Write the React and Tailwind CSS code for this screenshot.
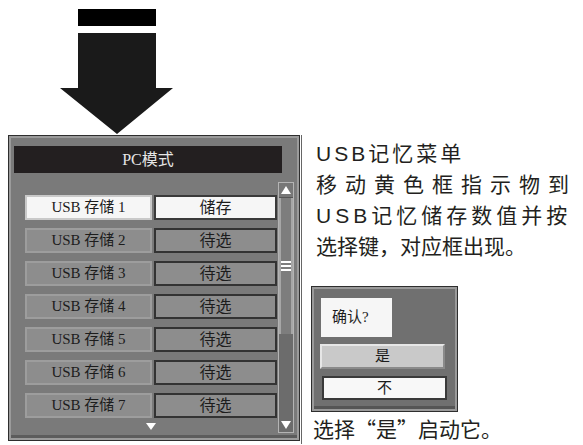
import React from 'react';

const cellFont = { fontFamily: '"Liberation Serif", "Noto Sans CJK SC", serif' };

const rows = [1, 2, 3, 4, 5, 6, 7];

const BigArrow = () => (
  <svg width="583" height="135" viewBox="0 0 583 135" className="block">
    <rect x="78" y="9" width="78" height="17" fill="#000" />
    <polygon points="78,33 156,33 156,88 173,88 117,134 60,88 78,88" fill="#1a1a1a" />
  </svg>
);

const Row = ({ n }) => {
  const active = n === 1;
  return (
    <div className="flex h-[25px] gap-[2px] text-[15px] text-[#1c1c1c]" style={cellFont}>
      <div
        className={
          active
            ? 'w-[127px] flex items-center justify-center bg-[#f6f6f6] border-2 border-[#c9c9c9]'
            : 'w-[127px] flex items-center justify-center bg-[#8d8d8d] border-2 border-[#9d9d9d]'
        }
      >
        USB 存储 {n}
      </div>
      <div
        className={
          active
            ? 'w-[123px] flex items-center justify-center bg-[#f6f6f6] border-2 border-[#3a3a3a] text-[16px]'
            : 'w-[123px] flex items-center justify-center bg-[#8d8d8d] border-2 border-[#333] text-[16px]'
        }
      >
        {active ? '储存' : '待选'}
      </div>
    </div>
  );
};

const Scrollbar = () => (
  <div className="w-[16px] h-[251px] flex flex-col border border-[#b4b4b4] bg-[#6c6c6c]">
    <div className="h-[15px] flex items-center justify-center bg-[#777] border-b border-[#555]">
      <div className="w-0 h-0 border-l-[5px] border-r-[5px] border-b-[8px] border-l-transparent border-r-transparent border-b-white" />
    </div>
    <div className="h-[136px] flex items-center justify-center bg-[#7d7d7d] border-x-2 border-[#a6a6a6]">
      <div className="flex flex-col gap-[2px] w-[10px]">
        <div className="h-[2px] bg-white" />
        <div className="h-[2px] bg-white" />
        <div className="h-[2px] bg-white" />
      </div>
    </div>
    <div className="flex-1" />
    <div className="h-[15px] flex items-center justify-center">
      <div className="w-0 h-0 border-l-[5px] border-r-[5px] border-t-[8px] border-l-transparent border-r-transparent border-t-white" />
    </div>
  </div>
);

const Panel = () => (
  <div className="w-[292px] h-[306px] border border-[#2e2e2e] bg-[#7a7a7a] shadow-[inset_0_0_0_2px_#9b9b9b,inset_0_-5px_0_0_#5c5c5c] flex flex-col">
    <div
      className="mt-[10px] ml-[5px] w-[268px] h-[27px] bg-[#231f20] text-[#e6e6e6] text-[16px] flex items-center justify-center"
      style={cellFont}
    >
      PC模式
    </div>
    <div className="mt-[9px] flex">
      <div className="pl-[16px] pt-[13px] flex flex-col">
        <div className="flex flex-col gap-[8px]">
          {rows.map((n) => (
            <Row key={n} n={n} />
          ))}
        </div>
        <div className="mt-[5px] flex justify-center">
          <div className="w-0 h-0 border-l-[5px] border-r-[5px] border-t-[7px] border-l-transparent border-r-transparent border-t-white" />
        </div>
      </div>
      <div className="ml-[1px]">
        <Scrollbar />
      </div>
    </div>
  </div>
);

const ConfirmBox = () => (
  <div className="w-[147px] h-[126px] border border-[#2e2e2e] bg-[#707070] shadow-[inset_0_0_0_2px_#9a9a9a,inset_0_-5px_0_0_#555] flex flex-col text-[#1c1c1c]" style={cellFont}>
    <div className="mt-[11px] ml-[9px] w-[71px] h-[39px] bg-[#f6f6f6] flex items-center pl-[11px] text-[15px]">
      确认?
    </div>
    <div className="mt-[7px] ml-[8px] w-[125px] h-[25px] bg-[#c9c9c9] border-2 border-t-[#e6e6e6] border-l-[#e6e6e6] border-b-[#8a8a8a] border-r-[#8a8a8a] flex items-center justify-center text-[15px]">
      是
    </div>
    <div className="mt-[7px] ml-[10px] w-[125px] h-[24px] bg-[#f8f8f8] border-2 border-[#3a3a3a] flex items-center justify-center text-[15px]">
      不
    </div>
  </div>
);

export default function App() {
  return (
    <div className="w-[583px] h-[445px] bg-white overflow-hidden">
      <BigArrow />
      <div className="flex">
        <div className="ml-[8px]">
          <Panel />
        </div>
        <div
          className="ml-[1px] border-l border-[#666] pl-[14px] pt-[3px] flex flex-col text-[21px] leading-[31px] text-[#231f20]"
          style={{ fontFamily: '"Liberation Sans", "Noto Sans CJK SC", sans-serif' }}
        >
          <div className="tracking-[3px]">USB记忆菜单</div>
          <div className="tracking-[8px] whitespace-nowrap">移动黄色框指示物到</div>
          <div className="tracking-[4px] whitespace-nowrap">USB记忆储存数值并按</div>
          <div className="whitespace-nowrap">选择键，对应框出现。</div>
          <div className="mt-[24px] -ml-[5px]">
            <ConfirmBox />
          </div>
          <div
            className="mt-[1px] -ml-[3px] whitespace-nowrap"
            style={{ fontFamily: '"Noto Sans CJK SC", sans-serif' }}
          >
            选择“是”启动它。
          </div>
        </div>
      </div>
    </div>
  );
}
